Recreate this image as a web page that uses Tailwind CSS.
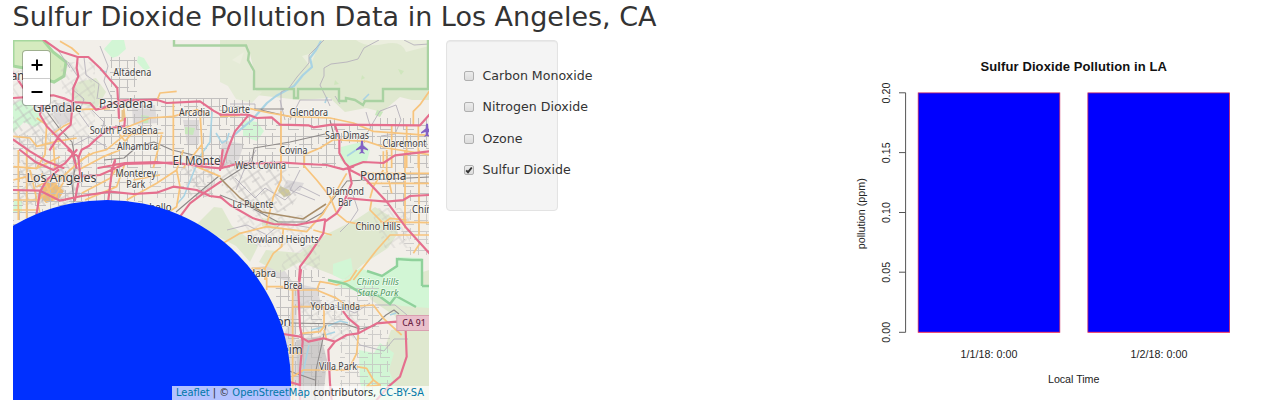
<!DOCTYPE html>
<html lang="en">
<head>
<meta charset="utf-8">
<title>Sulfur Dioxide Pollution Data</title>
<script src="https://cdn.jsdelivr.net/npm/@tailwindcss/browser@4"></script>
</head>
<body class="h-[415px] w-[1276px] overflow-hidden bg-white font-['DejaVu_Sans',sans-serif] text-[#333]">
<h1 class="h-10 pl-[12.5px] pt-px text-[27px] leading-[31px]">Sulfur Dioxide Pollution Data in Los Angeles, CA</h1>
<main class="flex items-start pl-[13px]">
<section class="relative h-[360px] w-[416px] shrink-0 overflow-hidden bg-[#f2efe9]">
<svg class="block" width="416" height="360" viewBox="13 40 416 360">
<defs>
<pattern id="grid" width="23" height="19" patternUnits="userSpaceOnUse"><path d="M0 3.500H23M0 11.500H14M4.500 0V19M12.500 3V15M19.500 0V11M12 15.500H23" fill="none" stroke="#c2c0bf" stroke-width="1"/></pattern>
<pattern id="slant" width="17" height="15" patternUnits="userSpaceOnUse" patternTransform="rotate(-35)"><path d="M0 3H17M0 9H9M4 0V15M11 3V15" fill="none" stroke="#bcbaba" stroke-width=".8"/></pattern>
</defs>
<!-- built-up land, parks and hills -->
<g class="fill-[#dddada]">
<path d="M55 103h15l2 17-12 7-6-11zM132 105h23l2 18-24 2zM183 120h16v24h-12zM222 140l22 4-6 18-18 5zM287 180l17 3-4 8-18-1zM250 268l30-4 14 20-5 40-8 16 6 60h25l12-40-9-12-20 0 2-38 24-6-4-16-28-6z"/>
<path d="M296 340l25-4 6 24-4 40h-24z" class="fill-[#cfcccb]"/>
</g>
<g class="fill-[#dfe8cf]">
<path d="M220 40H429V92H383V102H364L346 104V98H339V89H254V71L248 46H220z"/>
<path d="M339 89H383V92L429 89V100L412 100 400 97 382 112 366 108 345 112 330 98 300 100 256 95V89z"/>
<path d="M220 46L248 46 252 72 254 90 262 92 252 103 236 99 228 86 220 82z" class="fill-[#e5ebd7]"/>
<path d="M196 225L214 207 222 208 232 226 258 246 250 262 236 246zM325 235L357 219 375 207 393 218 398 233 388 248 362 265 346 280 300 262 280 273 259 262 266 250 300 253zM366 290L429 270V400H376L367 374 384 350 391 330 400 329 395 316 371 300zM262 218L283 221 276 230 262 226zM78 82L96 78 106 92 97 108 80 104 71 94z"/>
</g>
<path d="M356 40q10 8 28 4t22 8l23-6V40zM232 60l12-8-4 12zM302 56l14-4-6 14z" class="fill-[#ebeede]"/>
<path d="M398 69l6 2-3 4zM362 75l3 3-4 2zM335 80l4 4-5 1z" class="fill-[#cfe6bd]"/>
<g class="fill-[#d2f6d5]">
<path d="M13 104L24 99 39 113 42 122 35 127 24 122 13 133zM112 40h12l2 9-8 7-6 2-8-9zM138 56l6 2 6 10-5 3-8-9zM243 120l14 2 7 9-7 10-14-5zM341 147l20-5 9 8-3 11-14 7-13-8zM333 264l18-6 2 14-10 8-10-5zM359 350l15 3 6-10 14 10-5 17 12 30h-36l-5-18zM14 200h8v12h-9z"/>
<path d="M328 280L344 280 360 268 382 276 398 264 398 257 422 258 422 286 429 286 429 308 402 306 390 303 375 293 360 292 342 288z"/>
<path d="M141 115l8 1-1 7-6 0zM185 127l10 1-2 7-8-1zM377 110l6 2-3 5-5-2z" class="fill-[#c7e7bb]"/>
</g>
<path d="M13 40H43L53 52 66 62 64 76 54 82 44 79 34 70 13 66z" class="fill-[#d5ebbf] stroke-[#a6d79e] stroke-3"/>
<path d="M280 186l9 4 2 5-7 2-6-6z" class="fill-[#cfc99a]"/>
<path d="M45 181l10 2 9 8-5 8-13 4-8-8z" class="fill-[#f0bd73]"/>
<!-- street grids -->
<g fill="url(#grid)">
<path d="M110 57h27v43h-27zM98 98h130v70H105zM13 168h130v62H13zM225 118h115v50H220zM375 118h54v90h-45zM275 270h50v130h-45zM340 125h35v18h-35zM230 100h20v20h-20z"/>
<path d="M335 285h44v44h-48zM340 330h50v60h-50zM395 205h34v50h-22zM13 135h100v35H13zM143 160h70v38h-60z" opacity=".75"/>
</g>
<g fill="url(#slant)">
<path d="M13 100h48v50H13zM20 160h60v45H20zM220 160h60l12 18 8 14-10 18-30 6-38-26zM180 167h35v30h-25z"/>
<path d="M60 62h35v80H66zM232 215h75v32h-50zM290 245h30v25h-40zM300 300h60v40h-60zM370 208h40v40h-25zM13 70h30v30h-30z" opacity=".6"/>
</g>
<!-- water -->
<g class="fill-none stroke-[#a9d3e3] stroke-[2.2]" stroke-linejoin="round">
<path d="M321 41L316 50 310 58 312 67 303 75 294 86 285 91 276 96 267 103 260 111 252 120 241 129 231 138"/>
<path d="M216 133l6 10 5-3 2-7M100 70l6 2M212 112l-2 30-10 14-16 40-7 8M369 94l-6 6M327 97l-2 6M347 156l9-6M328 326l12-5 8 2M325 335l10-3M311 330l12-3M309 345l-4 18-2 12M390 315l6-2" class="stroke-[1.6]"/>
</g>
<!-- ridge trails and rail lines -->
<g class="fill-none stroke-[#b5b1bb] stroke-[.9]" stroke-linejoin="round">
<path d="M324 40L316 48 309 55 309 63 297 77 289 88 281 92M379 40L364 48 358 59 347 62 331 64 324 68 324 76 320 85 326 97 330 106M404 40l10 5 15-1M335 96l5 8M281 92V112M280 100l5 20M230 104h25v7"/>
<path d="M366 135l8-14 6-10 16-6 5 15-6 14-14 2M366 112l5 17M290 120l10-20h32M340 232l10-10 8-12-5-15M227 230l20-5 20 10 15-12 30 5M235 178l20 20 10-10 20 12 15-14 20 10M256 150l-12 20-8 20M300 170l-10 20 25 10M335 305l20 8 15-10M350 330l10 15 24 6 10-12 14 0M375 305l20 0 12 10"/>
<path d="M68 62l10 15-6 12 12 10-5 14 10 14M84 57l2 18 13 9-2 15M100 46l8 20-4 15 8 18M58 50l12 18M92 110l12 12-4 15M74 145l15-8 18 10"/>
</g>
<g class="fill-none stroke-[#8d8988] stroke-[1.1]" stroke-linejoin="round">
<path d="M44 108l15 20 13 14 4 22-4 20 2 18M104 160l20-2 14-12 16-4 18 8 30 7M220 195l30 12 28 15 28 0 16-9 12-15 13-17 82-4M219 183l33-21 2-14 36-6 35-8M254 109h30M290 323l55 1 15 5 14-3 12-11 8-5 5 4M326 325l-10 45-1 30M289 371l26 9M176 212l20-17 23-19M261 110l30 7M330 120l5 20"/>
</g>
<!-- primary roads -->
<g class="fill-none stroke-[#f7c47d] stroke-[5.2]" stroke-linejoin="round">
<g transform="translate(10 38) scale(.33333)">
<path d="M150 10L185 30 207 50M190 215L300 212M327 250L345 245 340 200M440 190L450 165 500 160M345 270L420 240 490 235 560 215 600 230M490 190V370M205 370L250 345 290 335 345 290 460 285M80 240L110 260 105 350 80 390M10 295L60 300 80 325 140 310 200 300M575 320L520 390M125 290L160 265 180 255M330 290L345 310 370 280M130 315L135 390M455 290L430 390M570 220L580 390"/></g>
<g transform="translate(220 38) scale(.33333)">
<path d="M90 212L150 225 210 235 330 240 400 255 460 280 628 292M183 220V390M253 390V350L300 330 340 305 440 310 500 330 628 350M515 262V390M560 262V390M595 262V390M628 160L600 200 580 220V262M0 235L60 232M490 340V390"/></g>
<g transform="translate(10 150) scale(.33333)">
<path d="M10 50L80 55 150 20M25 0V210M50 0V205M10 150H85L180 60 240 10M10 90L50 80M10 180H80M80 110L150 75M205 60L280 20 330 0M215 130L300 85 330 40M225 150L320 110 345 40M350 150L440 100 500 60 520 0M500 60L510 110 500 170 470 190M370 90L450 75M560 50L632 80M130 150L170 80M95 70L125 145M60 60L90 190"/></g>
<g transform="translate(220 150) scale(.33333)">
<path d="M183 0V90L160 140 140 225M250 45L290 90 330 140 350 190 380 215 430 225M0 285L60 250 140 230 260 245 310 190 380 70M280 240L335 255M135 355L160 310 185 290 190 235M500 0V60L515 130M555 0V235M597 0V255M430 70H628M440 100H628M480 215L628 218M400 390L470 300 510 255H628M455 150L450 180 490 220 510 205 560 210M490 60L460 110 450 145M135 355V390M95 355H135M580 310L600 280"/></g>
<g transform="translate(220 270) scale(.33333)">
<path d="M218 60V390M95 0L140 20V60M180 50L215 60H290L350 85 385 110 460 105 490 145 545 195M290 60L300 35 330 40 350 45 390 30 410 0M218 110H312V170L300 185 245 190M415 195L410 250 385 300H250L218 320M410 290L440 295 460 330 480 345 440 350 460 330M218 250H240M312 180L320 210M140 50H190"/></g>
<path d="M123 110V121" class="stroke-[3] stroke-[#e6c289]"/>
</g>
<path d="M220 178L240 198 262 212 303 219 326 204" class="fill-none stroke-[#a88d68] stroke-[1.5]"/>
<!-- motorways -->
<g class="fill-none stroke-[#e56f8e] stroke-[6.5]" stroke-linejoin="round" stroke-linecap="round">
<g transform="translate(10 38) scale(.33333)">
<path d="M93 0L150 40 203 57 235 57 270 90 300 125 322 150 327 240M10 180L80 175 130 172 165 182 188 192 240 195 258 215 280 210 325 188 440 185 470 195 570 190 610 218 632 230M203 57L200 90 205 115 190 150 188 195 182 260 150 290 120 335M10 105L40 150 75 185 95 200 90 230 110 265 145 300 185 340 200 390M345 242L343 265 300 270 262 300 235 325 215 335 205 360M265 390L345 375 440 372 490 378H632M10 305L60 340 110 370 160 390M315 370L305 390"/></g>
<g transform="translate(220 38) scale(.33333)">
<path d="M0 230H85L110 240 155 238 180 260 265 262 280 268 335 260 600 262 628 230M85 232L45 280 25 330 5 390M345 262L358 300V345L375 375 390 390M390 387L430 372 490 375 525 352 628 340"/></g>
<g transform="translate(10 150) scale(.33333)">
<path d="M30 0L75 35 130 60 165 40 200 0M175 0L205 20 210 70 195 150M10 120L90 122 150 152 215 138 300 125 370 132 440 128 490 110 560 120 600 138 632 142M145 60L110 90 90 125 80 190M210 80L270 75 345 42 490 38 600 52 632 55M315 30L305 70 295 150M632 95L610 110 580 130 540 160 510 200"/></g>
<g transform="translate(220 150) scale(.33333)">
<path d="M0 55L50 42 190 38 255 42 320 45 370 58 400 50M0 60L8 0M385 50L395 100 370 160 350 190 315 215 310 250 270 310 240 350 237 390M0 140L30 165 100 205 160 222 230 225 315 208M380 55L430 80 500 155 560 235 628 310M385 145L440 150 500 155 550 150 570 138 628 135"/></g>
<g transform="translate(220 270) scale(.33333)">
<path d="M243 0L235 60 240 170 248 215 240 300V390M190 192L240 200 265 215 310 205 345 215 380 195 415 190 470 160 530 155 545 165M345 215L325 240 330 340 335 390M370 125L385 145 415 170V190M557 180L560 260 540 320 505 350 470 390M205 335L240 345"/></g>
</g>
<!-- protected-area borders -->
<g class="fill-none stroke-[#a9d2a2] stroke-[2.4]">
<path d="M174 40V45.500H246L249 53 248 60 254 71V89H294V98H298V89H339V101H346V98L355 100 363 105 365 101H383V89H428V40"/>
<path d="M328 280L346 284 361 293 379 296 390 304 396 296 407 302 416 307M422 286H429M422 286V260H412L397 259V266L382 276 367 271" class="stroke-[#8fd19b]"/>
</g>
<!-- airports -->
<g class="fill-[#8461c4]">
<path d="M361 141q1-1 2 0l.4 4.500 4.600 3.700v1.400l-4.600-1.600-.2 2.700 1.500 1.200v.8l-2.700-.6-2.700.6v-.8l1.500-1.200-.2-2.700-4.600 1.600v-1.400l4.600-3.700z"/>
<path d="M426 124q1-1 2 0l.4 4.500 4.600 3.700v1.400l-4.600-1.600-.2 2.700 1.500 1.200v.8l-2.700-.6-2.700.6v-.8l1.500-1.200-.2-2.700-4.600 1.600v-1.400l4.600-3.700z"/>
</g>
<!-- place names -->
<g class="fill-[#3f3f3f] stroke-white/60 stroke-[1.6] font-['Noto_Sans',sans-serif] text-[10px]" paint-order="stroke" stroke-linejoin="round">
<text x="113.300" y="76" textLength="38" lengthAdjust="spacingAndGlyphs">Altadena</text>
<text x="179" y="115.700" textLength="31" lengthAdjust="spacingAndGlyphs">Arcadia</text>
<text x="89.700" y="133.700" textLength="68" lengthAdjust="spacingAndGlyphs">South Pasadena</text>
<text x="117" y="149.700" textLength="41" lengthAdjust="spacingAndGlyphs">Alhambra</text>
<text x="221.500" y="113" textLength="28.500" lengthAdjust="spacingAndGlyphs">Duarte</text>
<text x="289.500" y="116" textLength="38.500" lengthAdjust="spacingAndGlyphs">Glendora</text>
<text x="325" y="139" textLength="44" lengthAdjust="spacingAndGlyphs">San Dimas</text>
<text x="382.500" y="147" textLength="44" lengthAdjust="spacingAndGlyphs">Claremont</text>
<text x="279.500" y="154" textLength="28" lengthAdjust="spacingAndGlyphs">Covina</text>
<text x="235" y="169" textLength="51" lengthAdjust="spacingAndGlyphs">West Covina</text>
<text x="115.500" y="177" textLength="40.500" lengthAdjust="spacingAndGlyphs">Monterey</text>
<text x="126.300" y="188" textLength="19" lengthAdjust="spacingAndGlyphs">Park</text>
<text x="120" y="211" textLength="51.500" lengthAdjust="spacingAndGlyphs">Montebello</text>
<text x="326" y="195" textLength="38" lengthAdjust="spacingAndGlyphs">Diamond</text>
<text x="338" y="206.300" textLength="14" lengthAdjust="spacingAndGlyphs">Bar</text>
<text x="232.500" y="207.500" textLength="41" lengthAdjust="spacingAndGlyphs">La Puente</text>
<text x="412" y="212.500" textLength="26" lengthAdjust="spacingAndGlyphs">Chino</text>
<text x="355.500" y="229.500" textLength="45" lengthAdjust="spacingAndGlyphs">Chino Hills</text>
<text x="247" y="242.500" textLength="71.500" lengthAdjust="spacingAndGlyphs">Rowland Heights</text>
<text x="235" y="276.500" textLength="41" lengthAdjust="spacingAndGlyphs">La Habra</text>
<text x="283.500" y="289" textLength="19" lengthAdjust="spacingAndGlyphs">Brea</text>
<text x="310.500" y="310.300" textLength="49.500" lengthAdjust="spacingAndGlyphs">Yorba Linda</text>
<text x="319" y="369.500" textLength="38" lengthAdjust="spacingAndGlyphs">Villa Park</text>
<g class="text-[12px]">
<text x="99" y="107.700" textLength="54" lengthAdjust="spacingAndGlyphs">Pasadena</text>
<text x="33" y="111.500" textLength="48.500" lengthAdjust="spacingAndGlyphs">Glendale</text>
<text x="4" y="80" textLength="20" lengthAdjust="spacingAndGlyphs">Can</text>
<text x="172.500" y="164.700" textLength="48" lengthAdjust="spacingAndGlyphs">El Monte</text>
<text x="26.500" y="182" textLength="70" lengthAdjust="spacingAndGlyphs">Los Angeles</text>
<text x="360" y="180" textLength="46.500" lengthAdjust="spacingAndGlyphs">Pomona</text>
<text x="240" y="325.700" textLength="51" lengthAdjust="spacingAndGlyphs">Fullerton</text>
<text x="254" y="354" textLength="48.500" lengthAdjust="spacingAndGlyphs">Anaheim</text>
</g>
<g class="fill-[#4f9962] text-[9.500px] italic">
<text x="356.500" y="284.700" textLength="42.500" lengthAdjust="spacingAndGlyphs">Chino Hills</text>
<text x="357.500" y="295.500" textLength="41" lengthAdjust="spacingAndGlyphs">State Park</text>
</g>
</g>
<rect x="396.800" y="315.500" width="36" height="15" class="fill-[#eac0cc] stroke-[#d99fb0] stroke-1"/>
<text x="402.300" y="326.300" textLength="23.300" lengthAdjust="spacingAndGlyphs" class="fill-[#6c2444] font-['Noto_Sans',sans-serif] text-[9.300px] font-medium">CA 91</text>
<circle cx="107" cy="384" r="184" class="fill-[#0030ff]"/>
</svg>
<div class="absolute left-[9px] top-[10px] h-[56px] w-[29px] overflow-hidden rounded-[4px] border border-black/25 bg-white bg-clip-padding">
<svg class="block" width="27" height="54" viewBox="0 0 27 54"><path d="M0 27.500H27" stroke="#ccc"/><path d="M8.500 14H19.500M14 8.500V19.500M8.500 41H19.500" stroke="#000" stroke-width="2"/></svg>
</div>
<div class="absolute bottom-0 right-0 h-[14px] w-[257px] whitespace-nowrap bg-white/70 pl-1 font-['DejaVu_Sans_Condensed','DejaVu_Sans',sans-serif] text-[11px] leading-[13px] text-[#333]"><span class="text-[#0078a8]">Leaflet</span> | © <span class="text-[#0078a8]">OpenStreetMap</span> contributors, <span class="text-[#0078a8]">CC-BY-SA</span></div>
</section>
<aside class="ml-[17px] flex h-[171px] w-[112px] shrink-0 flex-col gap-[11.350px] rounded-[4px] border border-[#e3e3e3] bg-[#f4f4f4] pl-[17px] pt-[25px] text-[12.600px] leading-5 shadow-[inset_0_1px_1px_rgba(0,0,0,0.05)]">
<label class="flex items-center gap-[8.500px] whitespace-nowrap"><span class="size-[10px] shrink-0 rounded-[2px] border border-[#b0b0b0] bg-linear-to-b from-[#ececec] to-[#dcdcdc]"></span>Carbon Monoxide</label>
<label class="flex items-center gap-[8.500px] whitespace-nowrap"><span class="size-[10px] shrink-0 rounded-[2px] border border-[#b0b0b0] bg-linear-to-b from-[#ececec] to-[#dcdcdc]"></span>Nitrogen Dioxide</label>
<label class="flex items-center gap-[8.500px] whitespace-nowrap"><span class="size-[10px] shrink-0 rounded-[2px] border border-[#b0b0b0] bg-linear-to-b from-[#ececec] to-[#dcdcdc]"></span>Ozone</label>
<label class="flex items-center gap-[8.500px] whitespace-nowrap"><span class="size-[10px] shrink-0 rounded-[2px] border border-[#b0b0b0] bg-linear-to-b from-[#ececec] to-[#dcdcdc]"><svg class="block" width="8" height="8" viewBox="0 0 8 8"><path d="M1.200 4.300L3 6.200 6.800 1.500" fill="none" stroke="#333" stroke-width="1.900"/></svg></span>Sulfur Dioxide</label>
</aside>
<svg class="ml-[282px] block shrink-0 font-['Liberation_Sans',sans-serif] text-[10.700px]" width="436" height="360" viewBox="840 40 436 360" fill="#222">
<text x="980.500" y="71" textLength="186.500" class="text-[13px] font-bold" fill="#111">Sulfur Dioxide Pollution in LA</text>
<path d="M899 92.800H905.600V332.300H899M899 152.600H905.600M899 212.500H905.600M899 272.200H905.600" fill="none" stroke="#555"/>
<g fill="#00f" stroke="#c8235f" stroke-width=".8"><rect x="918.200" y="92.900" width="141.600" height="239.400"/><rect x="1087.900" y="92.900" width="141.700" height="239.400"/></g>
<path d="M918 332.400H1060M1088 332.400H1230" stroke="#ff5070" stroke-width=".8"/>
<g text-anchor="middle">
<text transform="translate(890 93) rotate(-90)" textLength="21">0.20</text>
<text transform="translate(890 152.700) rotate(-90)" textLength="21">0.15</text>
<text transform="translate(890 212.500) rotate(-90)" textLength="21">0.10</text>
<text transform="translate(890 272.300) rotate(-90)" textLength="21">0.05</text>
<text transform="translate(890 332.200) rotate(-90)" textLength="21">0.00</text>
<text transform="translate(864.500 213.800) rotate(-90)" textLength="71">pollution (ppm)</text>
<text x="989" y="357.500" textLength="57">1/1/18: 0:00</text>
<text x="1159" y="357.500" textLength="57">1/2/18: 0:00</text>
<text x="1073.700" y="383" textLength="51.500">Local Time</text>
</g>
</svg>
</main>
</body>
</html>
